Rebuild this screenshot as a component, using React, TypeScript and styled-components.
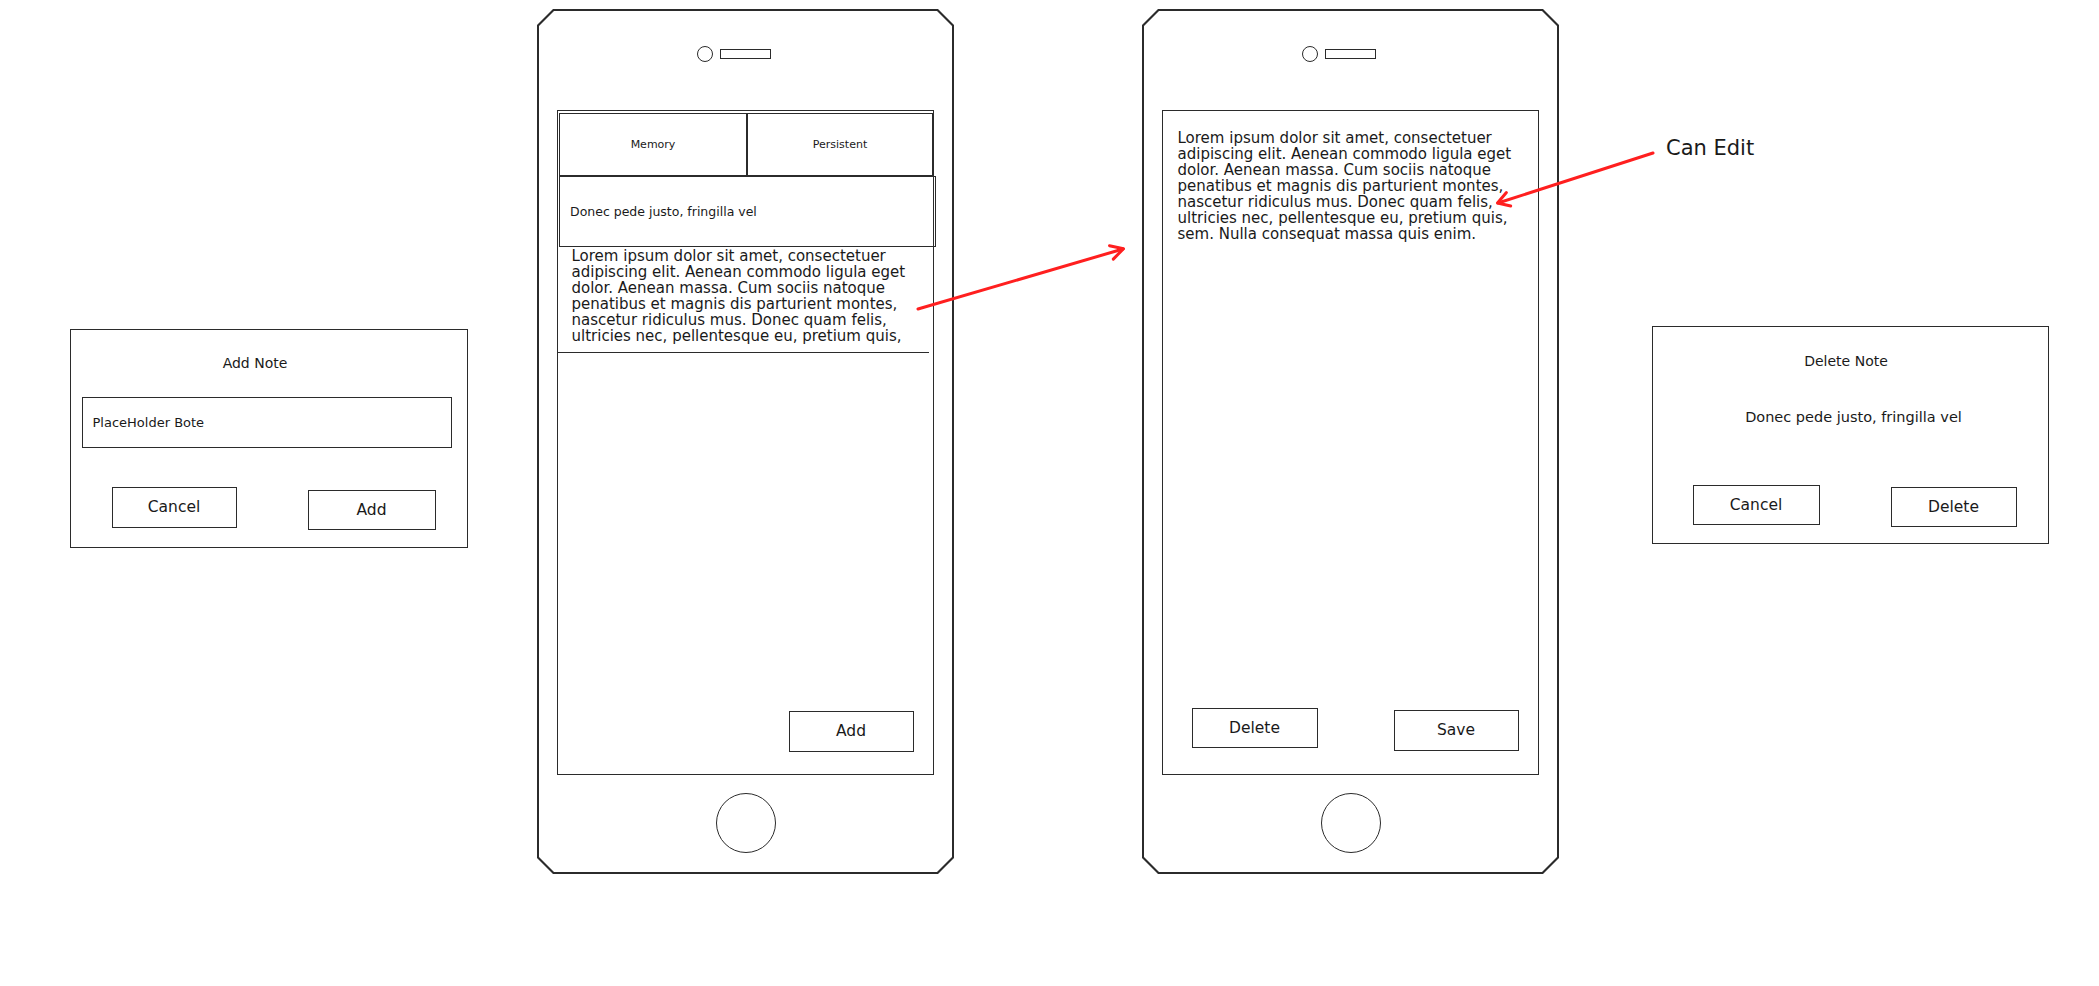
import React from 'react'
import styled, { createGlobalStyle } from 'styled-components'

const GlobalStyle = createGlobalStyle`
  html, body {
    margin: 0;
    padding: 0;
    background: #ffffff;
  }
  body {
    font-family: "DejaVu Sans", "Liberation Sans", sans-serif;
    color: #1a1a1a;
  }
`

const INK = '#2b2b2b'
const RED = '#ff1f1f'

const Canvas = styled.div`
  position: relative;
  width: 2099px;
  height: 986px;
  box-sizing: border-box;
  padding: 9px 0 0 70px;
  display: flex;
  align-items: flex-start;
  overflow: hidden;
`

const Dialog = styled.div<{ $ml: number; $mt: number; $w: number; $h: number }>`
  box-sizing: border-box;
  width: ${(p) => p.$w}px;
  height: ${(p) => p.$h}px;
  margin-left: ${(p) => p.$ml}px;
  margin-top: ${(p) => p.$mt}px;
  border: 1.5px solid ${INK};
  display: flex;
  flex-direction: column;
  flex-shrink: 0;
`

const DialogTitle = styled.div<{ $pt: number; $shift?: number }>`
  padding-top: ${(p) => p.$pt}px;
  padding-right: ${(p) => (p.$shift ? p.$shift : 0)}px;
  font-size: 14px;
  line-height: 20px;
  text-align: center;
`

const DialogBody = styled.div`
  margin-top: 36px;
  font-size: 14.5px;
  line-height: 20px;
  text-align: center;
  padding-left: 6px;
`

const InputBox = styled.div`
  box-sizing: border-box;
  margin: 24px 0 0 10.5px;
  width: 370px;
  height: 51px;
  border: 1.5px solid ${INK};
  display: flex;
  align-items: center;
  padding-left: 10px;
  font-size: 13px;
`

const ButtonRow = styled.div<{ $mt: number; $pl: number; $gap: number }>`
  display: flex;
  align-items: flex-start;
  margin-top: ${(p) => p.$mt}px;
  padding-left: ${(p) => p.$pl}px;
  gap: ${(p) => p.$gap}px;
`

const SketchButton = styled.div<{ $w: number; $h?: number; $nudge?: number }>`
  box-sizing: border-box;
  width: ${(p) => p.$w}px;
  height: ${(p) => p.$h ?? 41}px;
  margin-top: ${(p) => p.$nudge ?? 0}px;
  border: 1.5px solid ${INK};
  background: #fff;
  display: flex;
  align-items: center;
  justify-content: center;
  font-size: 15.5px;
  flex-shrink: 0;
`

/* phone device frame: chamfered outline built from two clipped layers */
const chamfer = (c: number) => `polygon(
  ${c}px 0, calc(100% - ${c}px) 0, 100% ${c}px, 100% calc(100% - ${c}px),
  calc(100% - ${c}px) 100%, ${c}px 100%, 0 calc(100% - ${c}px), 0 ${c}px
)`

const Phone = styled.div<{ $ml: number }>`
  box-sizing: border-box;
  width: 417px;
  height: 865px;
  margin-left: ${(p) => p.$ml}px;
  padding: 2px;
  background: ${INK};
  clip-path: ${chamfer(16)};
  flex-shrink: 0;
`

const PhoneBody = styled.div`
  width: 100%;
  height: 100%;
  background: #fff;
  clip-path: ${chamfer(15)};
  display: flex;
  flex-direction: column;
`

const CameraRow = styled.div`
  display: flex;
  align-items: center;
  gap: 7px;
  margin-top: 35px;
  padding-left: 158px;
  height: 16px;
`

const Camera = styled.div`
  box-sizing: border-box;
  width: 16px;
  height: 16px;
  border-radius: 50%;
  border: 1.5px solid ${INK};
`

const Speaker = styled.div`
  box-sizing: border-box;
  width: 51px;
  height: 10px;
  border: 1.5px solid ${INK};
`

const Screen = styled.div`
  box-sizing: border-box;
  margin: 48px 0 0 18px;
  width: 377px;
  height: 665px;
  border: 1.5px solid ${INK};
  display: flex;
  flex-direction: column;
`

const HomeButton = styled.div`
  box-sizing: border-box;
  align-self: center;
  margin-top: 18px;
  width: 60px;
  height: 60px;
  border-radius: 50%;
  border: 1.5px solid ${INK};
`

const TabBar = styled.div`
  display: flex;
  margin: 1.5px 0 0 1px;
  height: 63px;
`

const Tab = styled.div<{ $w?: number }>`
  box-sizing: border-box;
  ${(p) => (p.$w ? `width: ${p.$w}px;` : 'flex: 1;')}
  height: 100%;
  border: 1.5px solid ${INK};
  display: flex;
  align-items: center;
  justify-content: center;
  font-size: 11px;
`

const NoteItem = styled.div`
  box-sizing: border-box;
  height: 71px;
  margin: 0 -3px 0 1px;
  border: 1.5px solid ${INK};
  display: flex;
  align-items: center;
  padding-left: 10px;
  font-size: 12.5px;
`

const Paragraph = styled.div<{ $pt: number; $pl: number }>`
  padding: ${(p) => p.$pt}px 0 0 ${(p) => p.$pl}px;
  font-size: 15px;
  line-height: 16px;
  white-space: pre-line;
`

const Divider = styled.div`
  margin: 8px 4px 0 0;
  border-top: 1.5px solid ${INK};
`

const Spacer = styled.div`
  flex: 1;
`

const ScreenFooter = styled.div<{ $pl: number; $pr: number; $pb: number; $end?: boolean }>`
  display: flex;
  align-items: flex-end;
  justify-content: ${(p) => (p.$end ? 'flex-end' : 'space-between')};
  padding: 0 ${(p) => p.$pr}px ${(p) => p.$pb}px ${(p) => p.$pl}px;
`

const Lifted = styled(SketchButton)<{ $lift: number }>`
  margin-bottom: ${(p) => p.$lift}px;
`

const Annotations = styled.svg`
  position: absolute;
  left: 0;
  top: 0;
  pointer-events: none;
`

const Note = styled.div`
  position: absolute;
  left: 1666px;
  top: 135px;
  font-size: 21px;
  line-height: 26px;
`

const PREVIEW = `Lorem ipsum dolor sit amet, consectetuer
adipiscing elit. Aenean commodo ligula eget
dolor. Aenean massa. Cum sociis natoque
penatibus et magnis dis parturient montes,
nascetur ridiculus mus. Donec quam felis,
ultricies nec, pellentesque eu, pretium quis,`

const FULL = `${PREVIEW}
sem. Nulla consequat massa quis enim.`

const ListPhone: React.FC = () => (
  <Phone $ml={69}>
    <PhoneBody>
      <CameraRow>
        <Camera />
        <Speaker />
      </CameraRow>
      <Screen>
        <TabBar>
          <Tab $w={188}>Memory</Tab>
          <Tab>Persistent</Tab>
        </TabBar>
        <NoteItem>Donec pede justo, fringilla vel</NoteItem>
        <Paragraph $pt={1} $pl={13.5}>{PREVIEW}</Paragraph>
        <Divider />
        <Spacer />
        <ScreenFooter $end $pl={0} $pr={19.5} $pb={22.5}>
          <SketchButton $w={125}>Add</SketchButton>
        </ScreenFooter>
      </Screen>
      <HomeButton />
    </PhoneBody>
  </Phone>
)

const EditPhone: React.FC = () => (
  <Phone $ml={188}>
    <PhoneBody>
      <CameraRow>
        <Camera />
        <Speaker />
      </CameraRow>
      <Screen>
        <Paragraph $pt={18.5} $pl={14.5}>{FULL}</Paragraph>
        <Spacer />
        <ScreenFooter $pl={28.5} $pr={19.5} $pb={23.5}>
          <Lifted $w={126} $h={40} $lift={3}>Delete</Lifted>
          <SketchButton $w={125}>Save</SketchButton>
        </ScreenFooter>
      </Screen>
      <HomeButton />
    </PhoneBody>
  </Phone>
)

const App: React.FC = () => (
  <>
    <GlobalStyle />
    <Canvas>
      <Dialog $ml={0} $mt={320} $w={398} $h={219}>
        <DialogTitle $pt={22.5} $shift={28}>Add Note</DialogTitle>
        <InputBox>PlaceHolder Bote</InputBox>
        <ButtonRow $mt={39} $pl={40.5} $gap={71}>
          <SketchButton $w={125}>Cancel</SketchButton>
          <SketchButton $w={128} $h={40} $nudge={3}>Add</SketchButton>
        </ButtonRow>
      </Dialog>

      <ListPhone />
      <EditPhone />

      <Dialog $ml={93} $mt={317} $w={397} $h={218}>
        <DialogTitle $pt={23.5} $shift={9}>Delete Note</DialogTitle>
        <DialogBody>Donec pede justo, fringilla vel</DialogBody>
        <ButtonRow $mt={58} $pl={39.5} $gap={71}>
          <SketchButton $w={127} $h={40}>Cancel</SketchButton>
          <SketchButton $w={126} $h={40} $nudge={2}>Delete</SketchButton>
        </ButtonRow>
      </Dialog>

      <Annotations width={2099} height={986} viewBox="0 0 2099 986">
        <g stroke={RED} strokeWidth={3} fill="none" strokeLinecap="round" strokeLinejoin="round">
          <path d="M918 309 L1123 249" />
          <path d="M1109.5 245.7 L1123.5 248.7 L1113.3 259.1" />
          <path d="M1653 153 L1498 203" />
          <path d="M1506.4 192.6 L1497.5 203 L1510.7 206" />
        </g>
      </Annotations>
      <Note>Can Edit</Note>
    </Canvas>
  </>
)

export default App
